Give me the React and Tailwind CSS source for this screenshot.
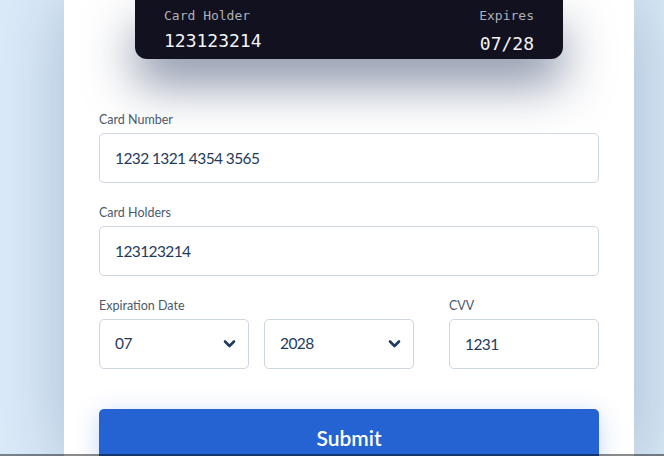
const labelCls = "block text-[12.5px] leading-4 text-[#4b5a6c] mb-[5px]";
const fieldCls =
  "h-[50px] w-full rounded-[5px] border border-[#cdd6e1] bg-white px-[15px] text-[15.5px] tracking-[-0.6px] text-[#1f3b5c] outline-none";

function Chevron() {
  return (
    <svg
      className="pointer-events-none absolute right-[13px] top-1/2 -translate-y-1/2"
      width="13"
      height="9"
      viewBox="0 0 13 9"
      fill="none"
    >
      <path d="M2 2l4.5 4.5L11 2" stroke="#1f3b5c" strokeWidth="2.6" strokeLinecap="round" strokeLinejoin="round" />
    </svg>
  );
}

function SelectBox({ value, options }) {
  return (
    <div className="relative w-[150px]">
      <select defaultValue={value} className={`${fieldCls} appearance-none`}>
        {options.map((o) => (
          <option key={o}>{o}</option>
        ))}
      </select>
      <Chevron />
    </div>
  );
}

export default function App() {
  const months = ["01", "02", "03", "04", "05", "06", "07", "08", "09", "10", "11", "12"];
  const years = ["2025", "2026", "2027", "2028", "2029", "2030"];

  return (
    <div
      className="min-h-screen bg-gradient-to-r from-[#dcebfa] via-[#d6e6f4] to-[#d8e8f6] pl-[64px]"
      style={{ fontFamily: "Lato, 'Noto Sans', sans-serif" }}
    >
      <div className="min-h-screen w-[570px] bg-white px-[35px] shadow-[0_0_70px_rgba(70,100,140,0.35)]">
        <div className="mx-auto flex h-[59px] w-[428px] items-start justify-between rounded-b-[12px] bg-[#11111f] px-[29px] pt-[8px] shadow-[0_26px_48px_rgba(25,45,85,0.5)] [font-family:'DejaVu_Sans_Mono',monospace]">
          <div>
            <div className="text-[13px] leading-4 text-[#b0b0b8]">Card Holder</div>
            <div className="mt-[5px] text-[18px] leading-6 text-[#f4f4f6]">123123214</div>
          </div>
          <div className="text-right">
            <div className="text-[13px] leading-4 text-[#b0b0b8]">Expires</div>
            <div className="mt-[8px] text-[18px] leading-6 text-[#f4f4f6]">07/28</div>
          </div>
        </div>

        <form className="mt-[53px]">
          <label className={labelCls}>Card Number</label>
          <input readOnly value="1232 1321 4354 3565" className={fieldCls} />

          <label className={`${labelCls} mt-[22px]`}>Card Holders</label>
          <input readOnly value="123123214" className={fieldCls} />

          <div className="mt-[22px] flex gap-[35px]">
            <div>
              <label className={labelCls}>Expiration Date</label>
              <div className="flex gap-[15px]">
                <SelectBox value="07" options={months} />
                <SelectBox value="2028" options={years} />
              </div>
            </div>
            <div className="w-[150px]">
              <label className={labelCls}>CVV</label>
              <input readOnly value="1231" className={fieldCls} />
            </div>
          </div>

          <button
            type="button"
            className="mt-[40px] h-[58px] w-full rounded-[5px] bg-[#2463d1] text-[21px] font-semibold text-white shadow-[0_5px_25px_rgba(36,99,209,0.25)]"
          >
            Submit
          </button>
        </form>
      </div>
      <div className="fixed bottom-0 left-0 h-[2px] w-full bg-black/45" />
    </div>
  );
}
